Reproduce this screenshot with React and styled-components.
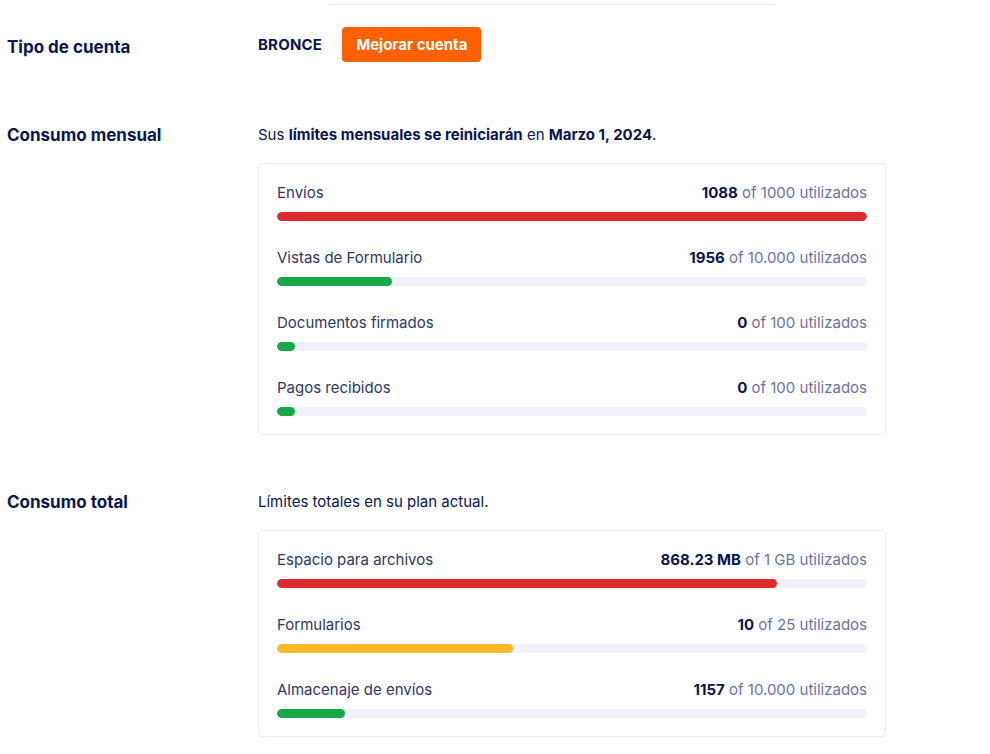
import React from "react";
import styled, { createGlobalStyle } from "styled-components";

const GlobalStyle = createGlobalStyle`
  body {
    margin: 0;
    background: #ffffff;
    font-family: "Inter", "Liberation Sans", sans-serif;
    color: #0a1551;
  }
`;

const monthly = [
  { label: "Envíos", used: "1088", total: "1000", pct: 100, color: "#dc2a2f" },
  { label: "Vistas de Formulario", used: "1956", total: "10.000", pct: 19.56, color: "#18a84a" },
  { label: "Documentos firmados", used: "0", total: "100", pct: 0, color: "#18a84a" },
  { label: "Pagos recibidos", used: "0", total: "100", pct: 0, color: "#18a84a" },
];

const totals = [
  { label: "Espacio para archivos", used: "868.23 MB", total: "1 GB", pct: 84.8, color: "#dc2a2f" },
  { label: "Formularios", used: "10", total: "25", pct: 40, color: "#fbb829" },
  { label: "Almacenaje de envíos", used: "1157", total: "10.000", pct: 11.57, color: "#18a84a" },
];

export default function App() {
  return (
    <Page>
      <GlobalStyle />
      <TopRule />

      <Section $top={22}>
        <Label $offset={10}>Tipo de cuenta</Label>
        <PlanRow>
          <PlanName>BRONCE</PlanName>
          <UpgradeButton>Mejorar cuenta</UpgradeButton>
        </PlanRow>
      </Section>

      <Section $top={63}>
        <Label>Consumo mensual</Label>
        <div>
          <Intro>
            Sus <b>límites mensuales se reiniciarán</b> en <b>Marzo 1, 2024</b>.
          </Intro>
          <Card>
            {monthly.map((m) => (
              <UsageRow key={m.label} {...m} />
            ))}
          </Card>
        </div>
      </Section>

      <Section $top={57}>
        <Label>Consumo total</Label>
        <div>
          <Intro>Límites totales en su plan actual.</Intro>
          <Card>
            {totals.map((m) => (
              <UsageRow key={m.label} {...m} />
            ))}
          </Card>
        </div>
      </Section>
    </Page>
  );
}

function UsageRow({ label, used, total, pct, color }) {
  return (
    <Row>
      <RowHead>
        <span>{label}</span>
        <Count>
          <b>{used}</b> of {total} utilizados
        </Count>
      </RowHead>
      <Track>
        <Fill $color={color} style={{ width: `${Math.min(pct, 100)}%` }} />
      </Track>
    </Row>
  );
}

const Page = styled.div`
  padding: 4px 0 0 7px;
  width: 983px;
`;

const TopRule = styled.div`
  margin-left: 321px;
  width: 447px;
  border-bottom: 1px solid #ececf2;
`;

const Section = styled.section`
  display: grid;
  grid-template-columns: 251px 628px;
  align-items: start;
  margin-top: ${(p) => p.$top}px;
`;

const Label = styled.h2`
  margin: 0;
  padding-top: ${(p) => p.$offset || 0}px;
  font-size: 17px;
  line-height: 20px;
  font-weight: 700;
  color: #0a1551;
`;

const PlanRow = styled.div`
  display: flex;
  align-items: center;
  gap: 20px;
`;

const PlanName = styled.span`
  font-size: 15px;
  font-weight: 700;
  letter-spacing: 0.2px;
  color: #0a1551;
`;

const UpgradeButton = styled.button`
  height: 35px;
  padding: 0 14px;
  border: none;
  border-radius: 4px;
  background: #ff6100;
  color: #ffffff;
  font-family: inherit;
  font-size: 15px;
  font-weight: 700;
`;

const Intro = styled.p`
  margin: 0 0 18px;
  font-size: 15px;
  line-height: 20px;
  color: #0a1551;
  b {
    font-weight: 700;
  }
`;

const Card = styled.div`
  border: 1px solid #ececf3;
  border-radius: 4px;
  padding: 19px 18px 18px 18px;
`;

const Row = styled.div`
  & + & {
    margin-top: 27px;
  }
`;

const RowHead = styled.div`
  display: flex;
  justify-content: space-between;
  font-size: 15px;
  line-height: 20px;
  color: #2f3763;
  margin-bottom: 9px;
`;

const Count = styled.span`
  color: #6c73a3;
  b {
    color: #0a1551;
    font-weight: 700;
  }
`;

const Track = styled.div`
  height: 9px;
  border-radius: 5px;
  background: #f1f1fb;
  overflow: hidden;
`;

const Fill = styled.div`
  height: 100%;
  min-width: 18px;
  border-radius: 5px;
  background: ${(p) => p.$color};
`;
